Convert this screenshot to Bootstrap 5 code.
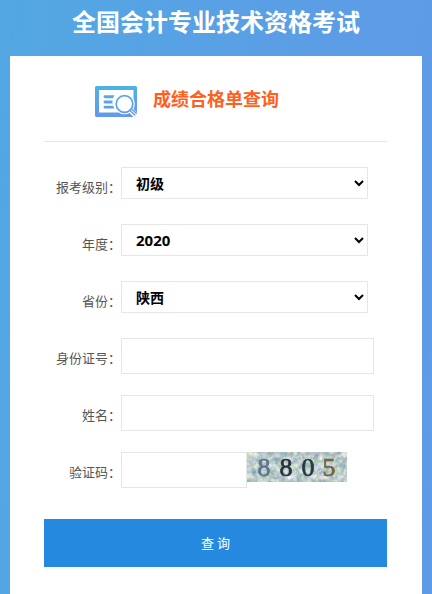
<!DOCTYPE html>
<html lang="zh-CN">
<head>
<meta charset="utf-8">
<meta name="viewport" content="width=device-width, initial-scale=1">
<title>全国会计专业技术资格考试</title>
<link href="https://cdn.jsdelivr.net/npm/bootstrap@5.3.0/dist/css/bootstrap.min.css" rel="stylesheet">
<style>
  body {
    background: linear-gradient(95deg, #52a8e2, #5a9fe5 55%, #5f9ae7);
    font-family: "Noto Sans CJK SC", sans-serif;
    font-size: 13px;
    line-height: 20px;
    color: #555;
  }
  .page-title { font-size: 24px; line-height: 42px; }
  .panel { margin: 14px 10px 0; padding: 0 35px 0 34px; }
  .panel-head {
    height: 86px;
    gap: 15px;
    padding: 0 0 2px 51px;
    border-bottom: 1px solid #e6e6e6;
  }
  .panel-head h2 { font-size: 18px; line-height: 24px; color: #ff5f1f; }
  .query-form { padding-top: 25px; }
  .field { min-height: 42px; margin-bottom: 15px; }
  .field label { width: 77px; padding-top: 10px; }
  .field-body { padding-right: 13px; }
  .box {
    appearance: auto;
    border: 1px solid #e6e6e6;
    border-radius: 0;
    background: #fff;
  }
  select.box {
    height: 32px;
    margin-right: 6px;
    padding: 0 10px;
    font-size: 14px;
    font-weight: 700;
    color: #000;
  }
  select.digits { font-family: "Open Sans", sans-serif; font-size: 15px; }
  input.box { height: 36px; padding: 0 14px; appearance: none; }
  input.code { max-width: 126px; }
  .btn-query {
    height: 48px;
    margin-top: 10px;
    margin-bottom: 27px;
    border-radius: 0;
    background: #2589e0;
    color: #fff;
    font-size: 13px;
  }
  .btn-query:hover { background: #1d7bcd; color: #fff; }
</style>
</head>
<body class="d-flex flex-column min-vh-100">
  <header class="text-center text-white">
    <h1 class="page-title fw-bold mb-0">全国会计专业技术资格考试</h1>
  </header>
  <main class="panel bg-white flex-grow-1">
    <div class="panel-head d-flex align-items-center">
      <svg width="43" height="32" viewBox="0 0 43 32" aria-hidden="true" class="mt-2 flex-shrink-0">
        <defs>
          <linearGradient id="ink" gradientUnits="userSpaceOnUse" x1="0" y1="0" x2="0" y2="32">
            <stop offset="0" stop-color="#4db3e2"/><stop offset="1" stop-color="#6797ec"/>
          </linearGradient>
        </defs>
        <path fill="url(#ink)" fill-rule="evenodd" d="M1.500 0H40.500Q42 0 42 1.500V29.500Q42 31 40.500 31H1.500Q0 31 0 29.500V1.500Q0 0 1.500 0ZM4 4V26.500H38.500V4Z"/>
        <path fill="url(#ink)" d="M10 9.300H19.500L18 12.200H10Q8.500 12 8.500 10.750Q8.500 9.300 10 9.300ZM10 14.500H17.500V17.400H10Q8.500 17.400 8.500 16Q8.500 14.500 10 14.500ZM10 19.700H18L19.500 22.600H10Q8.500 22.600 8.500 21.150Q8.500 19.700 10 19.700Z"/>
        <circle cx="29.500" cy="18" r="10.300" fill="#fff"/>
        <path stroke="#fff" stroke-width="5.600" fill="none" d="M34.500 23L43 31.500"/>
        <circle cx="29.500" cy="18" r="8.300" fill="#fff" stroke="url(#ink)" stroke-width="1.700"/>
        <path stroke="url(#ink)" stroke-width="1.500" stroke-linecap="round" fill="none" d="M35.500 25L39.800 29M37.300 23.500L41.300 27.300"/>
      </svg>
      <h2 class="fw-bold mb-0">成绩合格单查询</h2>
    </div>
    <form class="query-form">
      <div class="field d-flex">
        <label for="level" class="text-end flex-shrink-0">报考级别：</label>
        <div class="field-body d-flex flex-grow-1 align-items-start">
          <select id="level" class="box flex-grow-1"><option>初级</option><option>中级</option></select>
        </div>
      </div>
      <div class="field d-flex">
        <label for="year" class="text-end flex-shrink-0">年度：</label>
        <div class="field-body d-flex flex-grow-1 align-items-start">
          <select id="year" class="box digits flex-grow-1"><option>2020</option><option>2019</option></select>
        </div>
      </div>
      <div class="field d-flex">
        <label for="province" class="text-end flex-shrink-0">省份：</label>
        <div class="field-body d-flex flex-grow-1 align-items-start">
          <select id="province" class="box flex-grow-1"><option>陕西</option></select>
        </div>
      </div>
      <div class="field d-flex">
        <label for="idcard" class="text-end flex-shrink-0">身份证号：</label>
        <div class="field-body d-flex flex-grow-1 align-items-start">
          <input id="idcard" type="text" class="box w-100">
        </div>
      </div>
      <div class="field d-flex">
        <label for="fullname" class="text-end flex-shrink-0">姓名：</label>
        <div class="field-body d-flex flex-grow-1 align-items-start">
          <input id="fullname" type="text" class="box w-100">
        </div>
      </div>
      <div class="field d-flex">
        <label for="code" class="text-end flex-shrink-0">验证码：</label>
        <div class="field-body d-flex flex-grow-1 align-items-start">
          <input id="code" type="text" class="box code w-100">
          <svg width="100" height="30" viewBox="0 0 100 30" class="flex-shrink-0" role="img" aria-label="验证码图片">
            <defs>
              <filter id="grain" x="0" y="0" width="100%" height="100%" color-interpolation-filters="sRGB">
                <feTurbulence type="fractalNoise" baseFrequency="0.180" numOctaves="3" seed="8"/>
                <feColorMatrix values="0.700 0 0 0 0.390  0.450 0.150 0 0 0.500  0.400 0 0.300 0 0.450  0 0 0 0 1"/>
              </filter>
              <filter id="soft"><feGaussianBlur stdDeviation="0.400"/></filter>
            </defs>
            <rect width="100" height="30" fill="#c3d2ce"/>
            <rect width="100" height="30" filter="url(#grain)"/>
            <g font-family="Liberation Serif, serif" font-size="26" text-anchor="middle" stroke-width="0.700" filter="url(#soft)">
              <text x="17" y="24" fill="#5b7888" stroke="#5b7888">8</text>
              <text x="39" y="24" fill="#26343a" stroke="#26343a">8</text>
              <text x="61" y="24" fill="#243c42" stroke="#243c42">0</text>
              <text x="82" y="24" fill="#70683a" stroke="#70683a">5</text>
            </g>
          </svg>
        </div>
      </div>
      <button type="submit" class="btn btn-query w-100 border-0">查 询</button>
    </form>
  </main>
<script src="https://cdn.jsdelivr.net/npm/bootstrap@5.3.0/dist/js/bootstrap.bundle.min.js"></script>
</body>
</html>
